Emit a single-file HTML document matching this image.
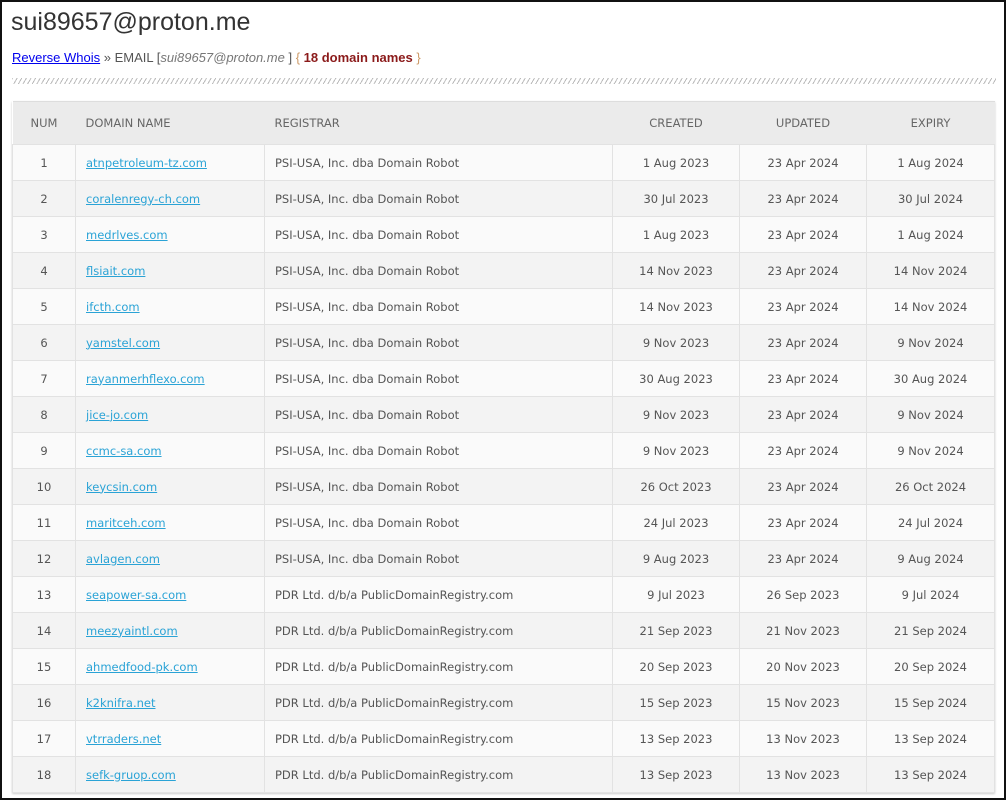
<!DOCTYPE html>
<html><head><style>
html,body{margin:0;padding:0;}
body{width:1006px;height:800px;box-sizing:border-box;border:2px solid #111;background:#fff;font-family:"DejaVu Sans","Liberation Sans",sans-serif;overflow:hidden;position:relative;}
h1{position:absolute;left:9px;top:6px;margin:0;font:25px "Liberation Sans",sans-serif;color:#333;}
.bc{position:absolute;left:10px;top:48px;font:13px "Liberation Sans",sans-serif;color:#555;}
.bc a{color:#00e;text-decoration:underline;}
.bc i{color:#777;}
.bc b{color:#8b1a1a;}
.bc .br{color:#c96;}
.hatch{position:absolute;left:10px;top:76px;width:984px;height:6px;background:repeating-linear-gradient(120deg,#bbb 0 1px,transparent 1px 4px);}
table{position:absolute;left:10px;top:99px;border-collapse:collapse;table-layout:fixed;width:982px;font-size:11.5px;color:#555;box-shadow:0 1px 2px #ccc;}
th{background:#ebebeb;height:42px;padding:0;font-weight:normal;text-align:left;color:#666;font-size:11.5px;border-top:1px solid #ddd;}
td{height:35px;border:1px solid #e2e2e2;text-align:center;padding:0;}
td.l{text-align:left;padding-left:10px;}
tr:nth-child(odd) td{background:#fafafa;}
tr:nth-child(even) td{background:#f3f3f3;}
td a{color:#2aa3d6;text-decoration:underline;}
</style></head><body>
<h1>sui89657@proton.me</h1>
<div class="bc"><a>Reverse Whois</a> » EMAIL [<i>sui89657@proton.me</i> ] <span class="br">{</span> <b>18 domain names</b> <span class="br">}</span></div>
<div class="hatch"></div>
<table>
<colgroup><col style="width:63px"><col style="width:189px"><col style="width:348px"><col style="width:127px"><col style="width:127px"><col style="width:128px"></colgroup>
<thead><tr><th style="text-align:center">NUM</th><th style="padding-left:10px">DOMAIN NAME</th><th style="padding-left:10px">REGISTRAR</th><th style="text-align:center">CREATED</th><th style="text-align:center">UPDATED</th><th style="text-align:center">EXPIRY</th></tr></thead>
<tbody>
<tr><td>1</td><td class="l"><a>atnpetroleum-tz.com</a></td><td class="l">PSI-USA, Inc. dba Domain Robot</td><td>1 Aug 2023</td><td>23 Apr 2024</td><td>1 Aug 2024</td></tr>
<tr><td>2</td><td class="l"><a>coralenregy-ch.com</a></td><td class="l">PSI-USA, Inc. dba Domain Robot</td><td>30 Jul 2023</td><td>23 Apr 2024</td><td>30 Jul 2024</td></tr>
<tr><td>3</td><td class="l"><a>medrlves.com</a></td><td class="l">PSI-USA, Inc. dba Domain Robot</td><td>1 Aug 2023</td><td>23 Apr 2024</td><td>1 Aug 2024</td></tr>
<tr><td>4</td><td class="l"><a>flsiait.com</a></td><td class="l">PSI-USA, Inc. dba Domain Robot</td><td>14 Nov 2023</td><td>23 Apr 2024</td><td>14 Nov 2024</td></tr>
<tr><td>5</td><td class="l"><a>ifcth.com</a></td><td class="l">PSI-USA, Inc. dba Domain Robot</td><td>14 Nov 2023</td><td>23 Apr 2024</td><td>14 Nov 2024</td></tr>
<tr><td>6</td><td class="l"><a>yamstel.com</a></td><td class="l">PSI-USA, Inc. dba Domain Robot</td><td>9 Nov 2023</td><td>23 Apr 2024</td><td>9 Nov 2024</td></tr>
<tr><td>7</td><td class="l"><a>rayanmerhflexo.com</a></td><td class="l">PSI-USA, Inc. dba Domain Robot</td><td>30 Aug 2023</td><td>23 Apr 2024</td><td>30 Aug 2024</td></tr>
<tr><td>8</td><td class="l"><a>jice-jo.com</a></td><td class="l">PSI-USA, Inc. dba Domain Robot</td><td>9 Nov 2023</td><td>23 Apr 2024</td><td>9 Nov 2024</td></tr>
<tr><td>9</td><td class="l"><a>ccmc-sa.com</a></td><td class="l">PSI-USA, Inc. dba Domain Robot</td><td>9 Nov 2023</td><td>23 Apr 2024</td><td>9 Nov 2024</td></tr>
<tr><td>10</td><td class="l"><a>keycsin.com</a></td><td class="l">PSI-USA, Inc. dba Domain Robot</td><td>26 Oct 2023</td><td>23 Apr 2024</td><td>26 Oct 2024</td></tr>
<tr><td>11</td><td class="l"><a>maritceh.com</a></td><td class="l">PSI-USA, Inc. dba Domain Robot</td><td>24 Jul 2023</td><td>23 Apr 2024</td><td>24 Jul 2024</td></tr>
<tr><td>12</td><td class="l"><a>avlagen.com</a></td><td class="l">PSI-USA, Inc. dba Domain Robot</td><td>9 Aug 2023</td><td>23 Apr 2024</td><td>9 Aug 2024</td></tr>
<tr><td>13</td><td class="l"><a>seapower-sa.com</a></td><td class="l">PDR Ltd. d/b/a PublicDomainRegistry.com</td><td>9 Jul 2023</td><td>26 Sep 2023</td><td>9 Jul 2024</td></tr>
<tr><td>14</td><td class="l"><a>meezyaintl.com</a></td><td class="l">PDR Ltd. d/b/a PublicDomainRegistry.com</td><td>21 Sep 2023</td><td>21 Nov 2023</td><td>21 Sep 2024</td></tr>
<tr><td>15</td><td class="l"><a>ahmedfood-pk.com</a></td><td class="l">PDR Ltd. d/b/a PublicDomainRegistry.com</td><td>20 Sep 2023</td><td>20 Nov 2023</td><td>20 Sep 2024</td></tr>
<tr><td>16</td><td class="l"><a>k2knifra.net</a></td><td class="l">PDR Ltd. d/b/a PublicDomainRegistry.com</td><td>15 Sep 2023</td><td>15 Nov 2023</td><td>15 Sep 2024</td></tr>
<tr><td>17</td><td class="l"><a>vtrraders.net</a></td><td class="l">PDR Ltd. d/b/a PublicDomainRegistry.com</td><td>13 Sep 2023</td><td>13 Nov 2023</td><td>13 Sep 2024</td></tr>
<tr><td>18</td><td class="l"><a>sefk-gruop.com</a></td><td class="l">PDR Ltd. d/b/a PublicDomainRegistry.com</td><td>13 Sep 2023</td><td>13 Nov 2023</td><td>13 Sep 2024</td></tr>
</tbody></table>
</body></html>
